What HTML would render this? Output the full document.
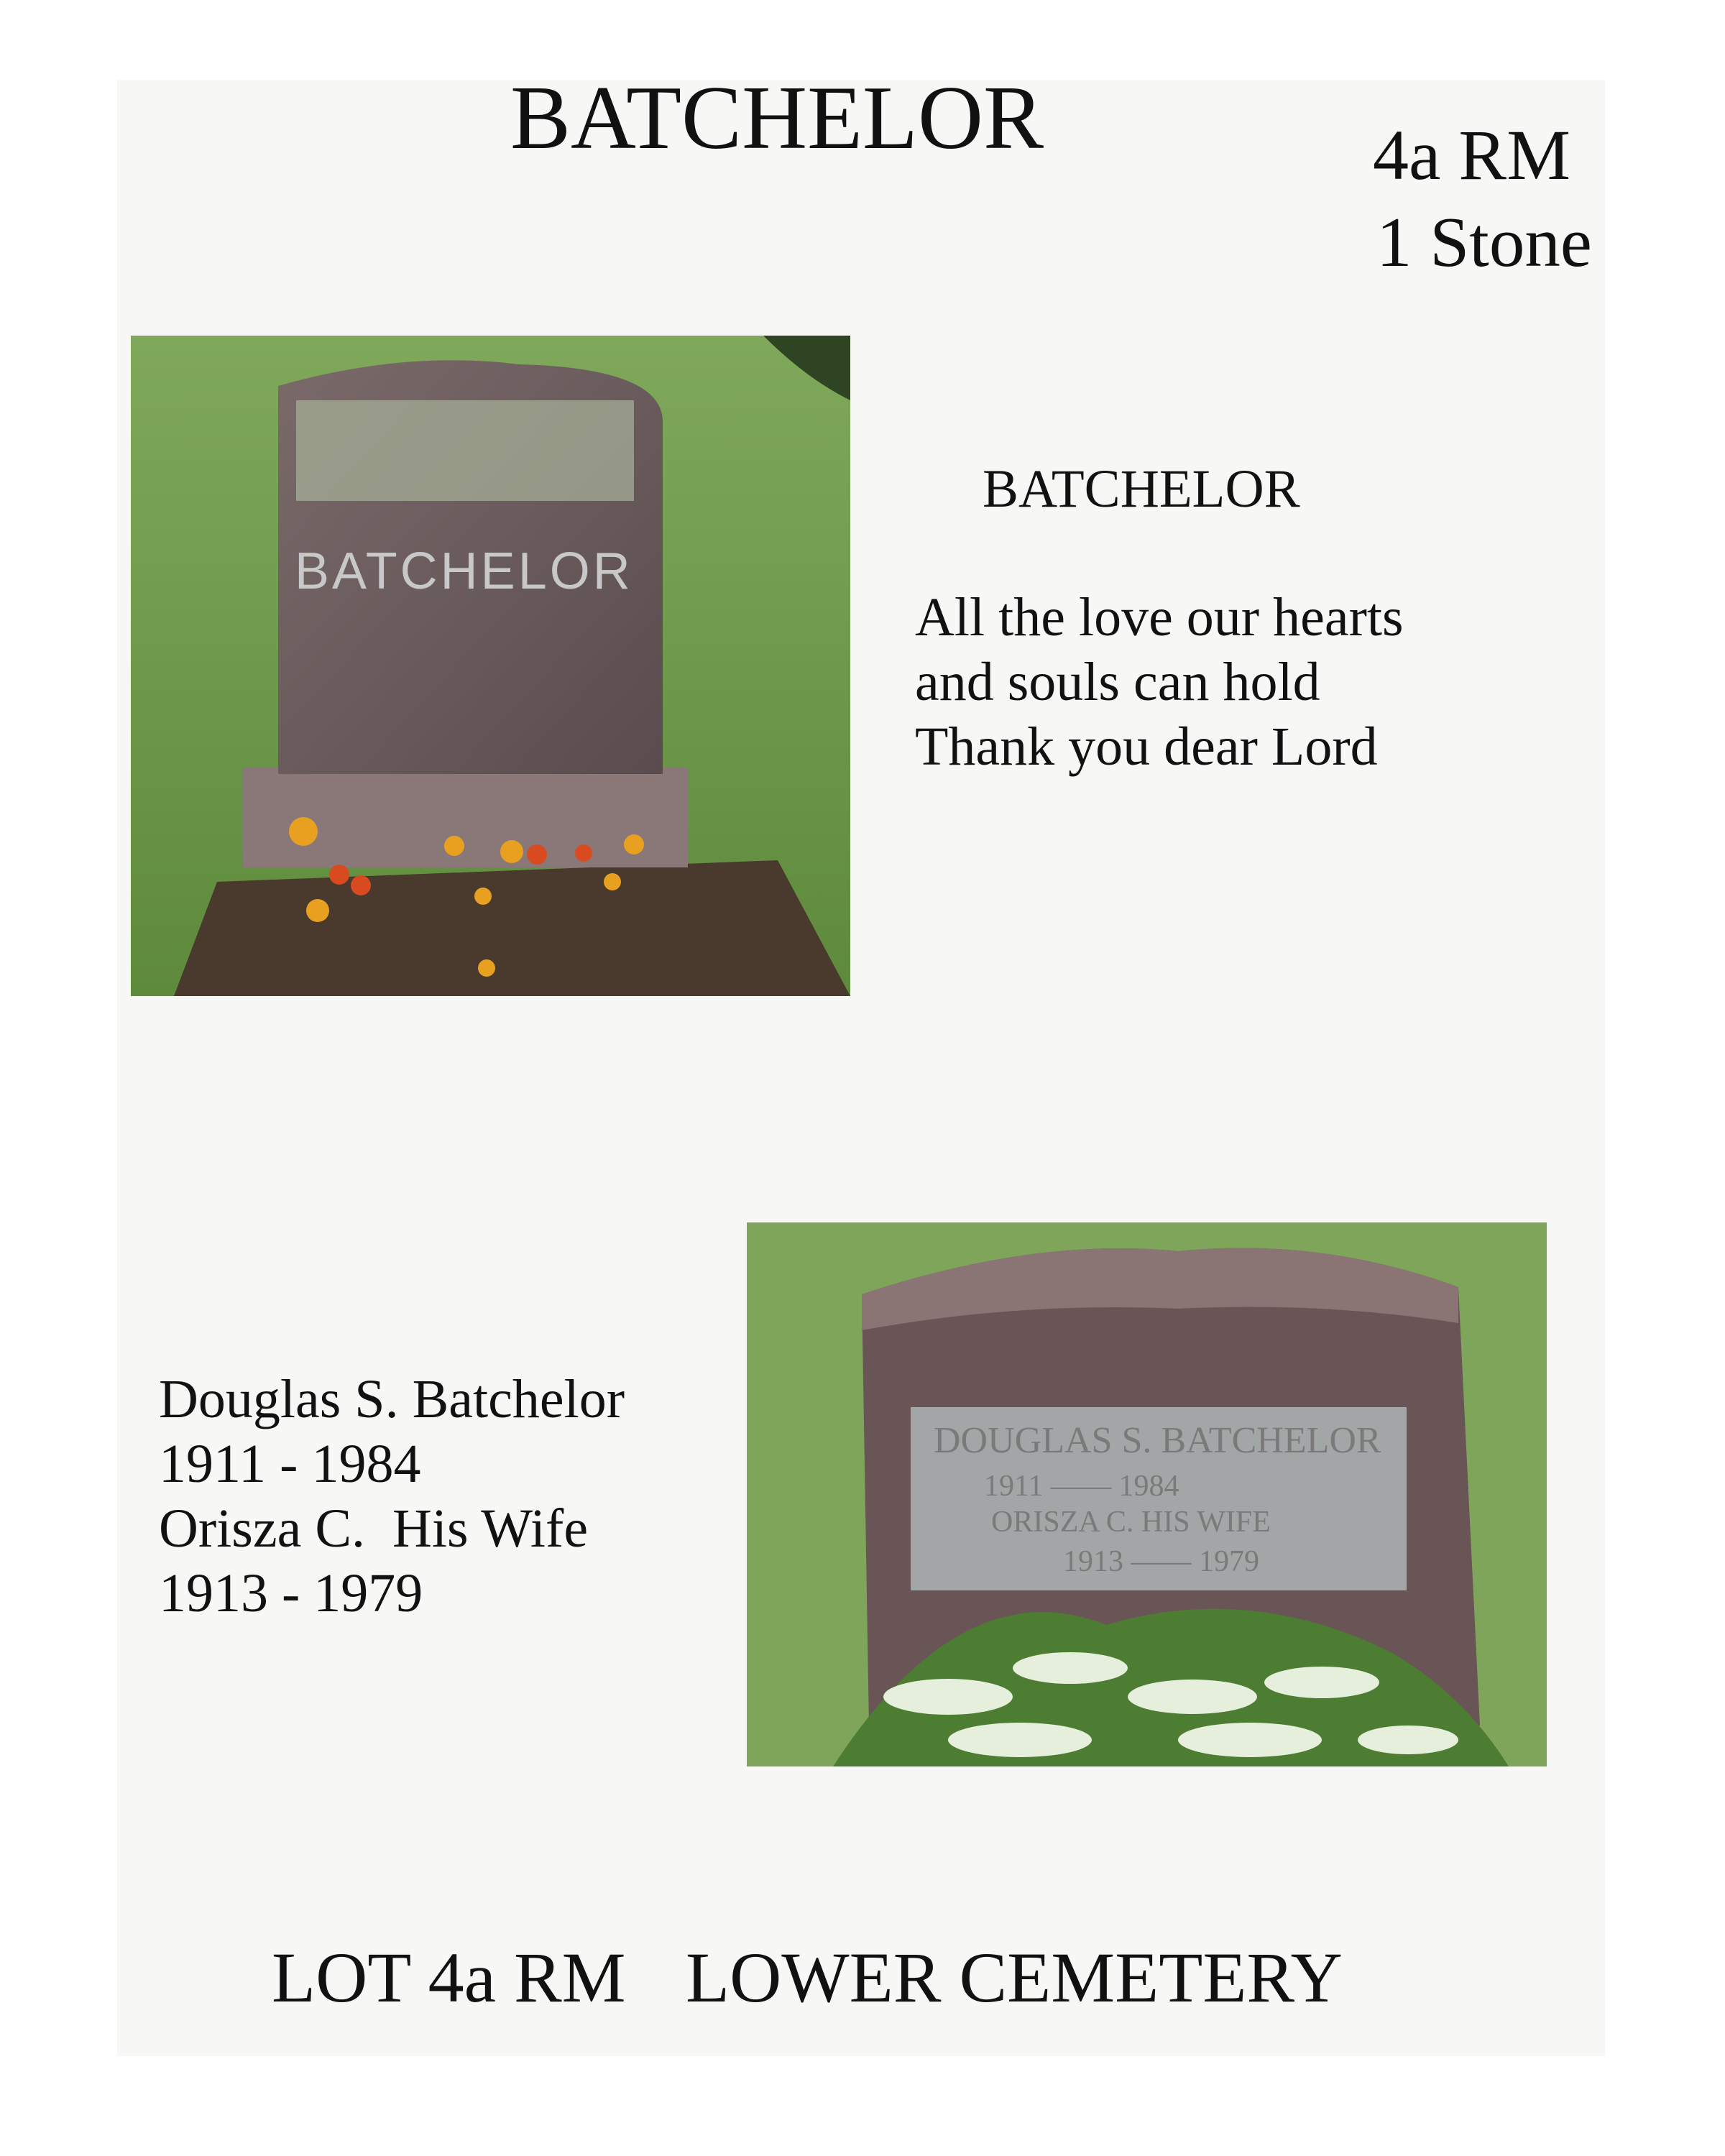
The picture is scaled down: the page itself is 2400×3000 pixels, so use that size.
<!DOCTYPE html>
<html><head><meta charset="utf-8"><style>
html,body{margin:0;padding:0;background:#fff;}
body{width:2400px;height:3000px;position:relative;overflow:hidden;font-family:"Liberation Serif",serif;color:#111;}
.page{position:absolute;left:163px;top:111px;width:2070px;height:2750px;background:#f7f7f5;}
.t{position:absolute;line-height:1;white-space:pre;}
.ph{position:absolute;overflow:hidden;}
</style></head><body>
<div class="page"></div>
<div class="t" style="left:710px;top:102px;font-size:126px;">BATCHELOR</div>
<div class="t" style="left:1910px;top:166px;font-size:100px;">4a RM</div>
<div class="t" style="left:1915px;top:288px;font-size:99px;">1 Stone</div>

<div class="ph" style="left:182px;top:467px;width:1001px;height:919px;">
<svg width="1001" height="919" viewBox="0 0 1001 919">
<defs><linearGradient id="g1" x1="0" y1="0" x2="0" y2="1"><stop offset="0" stop-color="#7fa85a"/><stop offset="1" stop-color="#5e8a3c"/></linearGradient>
<linearGradient id="s1" x1="0" y1="0" x2="1" y2="1"><stop offset="0" stop-color="#7a6a6a"/><stop offset="1" stop-color="#5a4c4e"/></linearGradient></defs>
<rect width="1001" height="919" fill="url(#g1)"/>
<path d="M880 0 L1001 0 L1001 90 Q940 60 880 0Z" fill="#2e4422"/>
<path d="M120 760 L900 730 L1001 919 L60 919Z" fill="#4a3a2e"/>
<rect x="155" y="600" width="620" height="140" fill="#8a7878"/>
<path d="M205 70 Q380 20 540 40 Q740 45 740 120 L740 610 L205 610Z" fill="url(#s1)"/>
<rect x="230" y="90" width="470" height="140" fill="#a9b39a" opacity="0.7"/>
<text x="228" y="352" font-family="Liberation Sans,sans-serif" font-size="72" fill="#c8c8c8" letter-spacing="4">BATCHELOR</text>
<g fill="#e8a020"><circle cx="240" cy="690" r="20"/><circle cx="450" cy="710" r="14"/><circle cx="530" cy="718" r="16"/><circle cx="700" cy="708" r="14"/><circle cx="260" cy="800" r="16"/><circle cx="490" cy="780" r="12"/><circle cx="670" cy="760" r="12"/><circle cx="495" cy="880" r="12"/></g>
<g fill="#d84a20"><circle cx="290" cy="750" r="14"/><circle cx="320" cy="765" r="14"/><circle cx="565" cy="722" r="14"/><circle cx="630" cy="720" r="12"/></g>
</svg></div>

<div class="t" style="left:1367px;top:643px;font-size:75px;">BATCHELOR</div>
<div class="t" style="left:1273px;top:821px;font-size:76px;">All the love our hearts</div>
<div class="t" style="left:1273px;top:911px;font-size:76px;">and souls can hold</div>
<div class="t" style="left:1273px;top:1001px;font-size:76px;">Thank you dear Lord</div>

<div class="ph" style="left:1039px;top:1701px;width:1113px;height:757px;">
<svg width="1113" height="757" viewBox="0 0 1113 757">
<rect width="1113" height="757" fill="#7fa55a"/>
<path d="M160 100 Q400 20 600 40 Q800 20 990 90 L1020 700 L170 700Z" fill="#6a5556"/>
<path d="M160 100 Q400 20 600 40 Q800 20 990 90 L990 140 Q800 110 600 120 Q380 110 160 150Z" fill="#8b7474"/>
<rect x="228" y="257" width="690" height="255" fill="#a3a6a6"/>
<text x="260" y="320" font-family="Liberation Serif,serif" font-size="52" fill="#7a7a7a">DOUGLAS S. BATCHELOR</text>
<text x="330" y="380" font-family="Liberation Serif,serif" font-size="42" fill="#7a7a7a">1911 —— 1984</text>
<text x="340" y="430" font-family="Liberation Serif,serif" font-size="42" fill="#7a7a7a">ORISZA C. HIS WIFE</text>
<text x="440" y="485" font-family="Liberation Serif,serif" font-size="42" fill="#7a7a7a">1913 —— 1979</text>
<path d="M120 757 Q300 480 500 560 Q700 500 900 600 Q1000 660 1060 757Z" fill="#4c7d32"/>
<g fill="#e6eedc"><ellipse cx="280" cy="660" rx="90" ry="25"/><ellipse cx="450" cy="620" rx="80" ry="22"/><ellipse cx="620" cy="660" rx="90" ry="24"/><ellipse cx="800" cy="640" rx="80" ry="22"/><ellipse cx="380" cy="720" rx="100" ry="24"/><ellipse cx="700" cy="720" rx="100" ry="24"/><ellipse cx="920" cy="720" rx="70" ry="20"/></g>
</svg></div>

<div class="t" style="left:221px;top:1909px;font-size:76px;">Douglas S. Batchelor</div>
<div class="t" style="left:221px;top:1999px;font-size:76px;">1911 - 1984</div>
<div class="t" style="left:221px;top:2089px;font-size:76px;">Orisza C.  His Wife</div>
<div class="t" style="left:221px;top:2179px;font-size:76px;">1913 - 1979</div>

<div class="t" style="left:378px;top:2702px;font-size:100px;">LOT 4a RM</div>
<div class="t" style="left:954px;top:2702px;font-size:100px;">LOWER CEMETERY</div>
</body></html>
